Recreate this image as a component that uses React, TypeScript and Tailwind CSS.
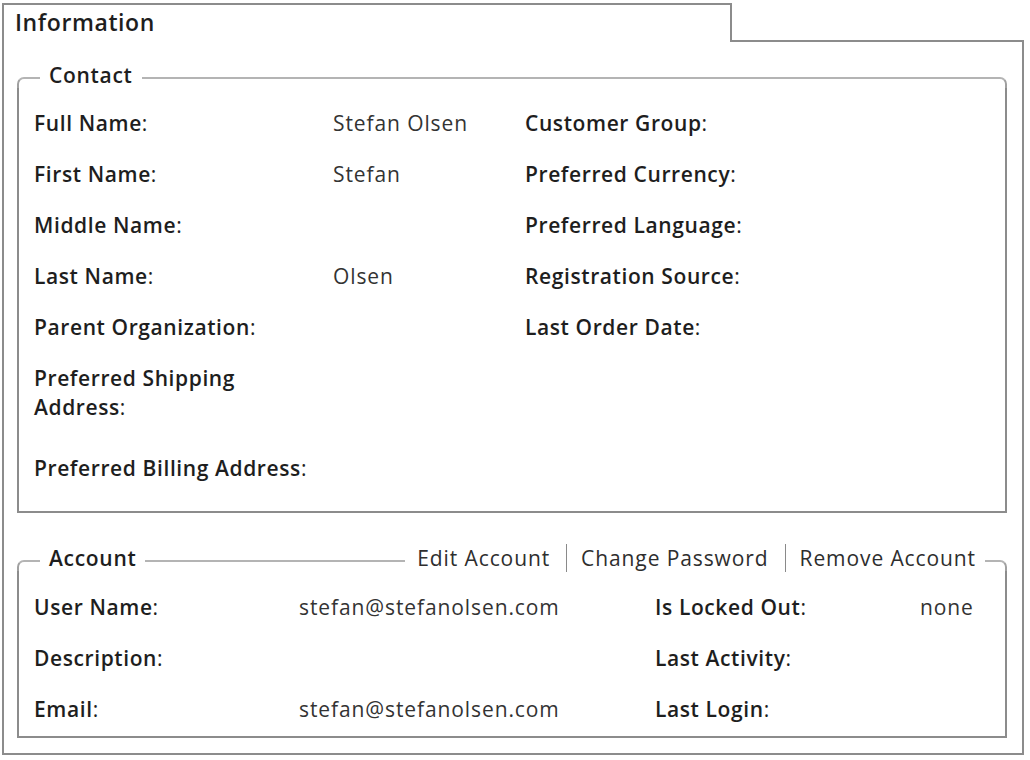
import type { ReactNode } from 'react';

const contactRows = [
  { label: 'Full Name', value: 'Stefan Olsen', label2: 'Customer Group' },
  { label: 'First Name', value: 'Stefan', label2: 'Preferred Currency' },
  { label: 'Middle Name', value: '', label2: 'Preferred Language' },
  { label: 'Last Name', value: 'Olsen', label2: 'Registration Source' },
  { label: 'Parent Organization', value: '', label2: 'Last Order Date' },
];

const accountRows = [
  { label: 'User Name', value: 'stefan@stefanolsen.com', label2: 'Is Locked Out', value2: 'none' },
  { label: 'Description', value: '', label2: 'Last Activity', value2: '' },
  { label: 'Email', value: 'stefan@stefanolsen.com', label2: 'Last Login', value2: '' },
];

const actions = ['Edit Account', 'Change Password', 'Remove Account'];

function Label({ text }: { text: string }) {
  return (
    <div className="flex">
      <span className="font-semibold tracking-[0.6px] text-[#1e1e1e]">{text}</span>
      <span className="text-[#1e1e1e]">:</span>
    </div>
  );
}

function Fieldset({
  title,
  right,
  children,
}: {
  title: string;
  right?: ReactNode;
  children: ReactNode;
}) {
  return (
    <div>
      <div className="flex h-[20px]">
        <div className="mt-[9px] h-[11px] w-[23px] rounded-tl-[7px] border-l-2 border-t-2 border-l-[#a0a0a0] border-t-[#b4b4b4]" />
        <span className="px-[9px] text-[21px] leading-[15px] font-semibold tracking-[0.7px] text-[#1e1e1e]">
          {title}
        </span>
        <div className="mt-[9px] flex-1 border-t-2 border-[#b4b4b4]" />
        {right}
        <div
          className={
            right
              ? 'mt-[9px] h-[11px] w-[22px] rounded-tr-[7px] border-r-2 border-t-2 border-r-[#a0a0a0] border-t-[#b4b4b4]'
              : 'mt-[9px] h-[11px] w-[12px] rounded-tr-[7px] border-r-2 border-t-2 border-r-[#a0a0a0] border-t-[#b4b4b4]'
          }
        />
      </div>
      <div className="border-x-2 border-b-2 border-[#8c8c8c]">{children}</div>
    </div>
  );
}

function AccountActions() {
  return (
    <div className="flex h-[20px] items-start pl-[12px] pr-[9px] text-[21px] leading-[15px] text-[#2e2e2e]">
      {actions.map((a, i) => (
        <div key={a} className="flex items-start">
          {i > 0 && <span className="mr-[14px] ml-[16px] -mt-[7px] h-[28px] w-px bg-[#8a8a8a]" />}
          <span>{a}</span>
        </div>
      ))}
    </div>
  );
}

export default function App() {
  return (
    <div className="h-[760px] w-[1030px] bg-white pl-[2px] pt-[3px] font-['Open_Sans',sans-serif] tracking-[0.9px] text-[#333]">
      <div className="flex w-[1022px] flex-col">
        <div className="flex h-[39px]">
          <div className="w-[730px] border-x-2 border-t-2 border-[#8c8c8c] pl-[11px] text-[23px] leading-[34px] font-semibold tracking-[0.6px] text-[#1e1e1e]">
            Information
          </div>
          <div className="flex-1 border-b-2 border-[#8c8c8c]" />
        </div>

        <div className="border-x-2 border-b-2 border-[#8c8c8c] pt-[26px] pr-[15px] pb-[15px] pl-[13px] text-[21px]">
          <Fieldset title="Contact">
            <div className="pt-[10px] pb-[17px] pl-[15px] leading-[29px]">
              {contactRows.map((r) => (
                <div key={r.label} className="flex py-[11px]">
                  <div className="w-[299px]">
                    <Label text={r.label} />
                  </div>
                  <div className="w-[192px]">{r.value}</div>
                  <div>
                    <Label text={r.label2} />
                  </div>
                </div>
              ))}
              <div className="flex flex-col pt-[11px] pb-[21px]">
                <span className="font-semibold tracking-[0.6px] text-[#1e1e1e]">Preferred Shipping</span>
                <Label text="Address" />
              </div>
              <div className="flex py-[11px]">
                <div className="w-[299px]">
                  <Label text="Preferred Billing Address" />
                </div>
              </div>
            </div>
          </Fieldset>

          <div className="mt-[38px]">
            <Fieldset title="Account" right={<AccountActions />}>
              <div className="pt-[11px] pb-px pl-[15px] leading-[29px]">
                {accountRows.map((r) => (
                  <div key={r.label} className="flex py-[11px]">
                    <div className="w-[265px]">
                      <Label text={r.label} />
                    </div>
                    <div className="w-[356px]">{r.value}</div>
                    <div className="w-[265px]">
                      <Label text={r.label2} />
                    </div>
                    <div>{r.value2}</div>
                  </div>
                ))}
              </div>
            </Fieldset>
          </div>
        </div>
      </div>
    </div>
  );
}
